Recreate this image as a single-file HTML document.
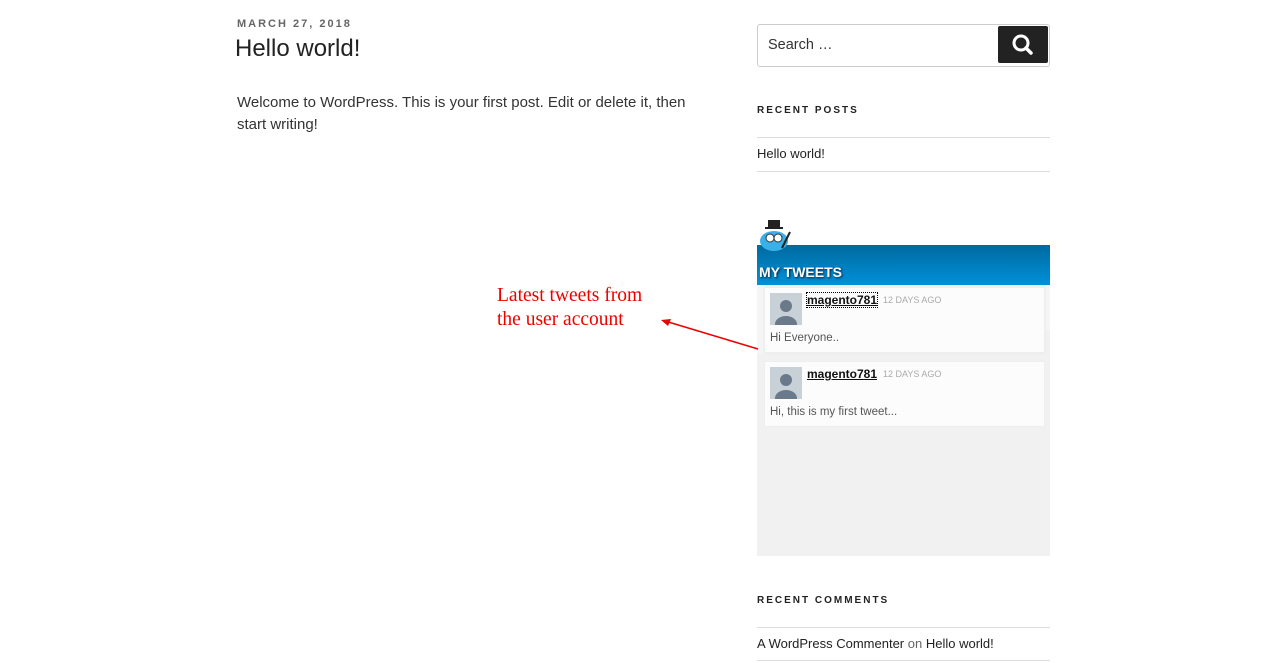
<!DOCTYPE html>
<html><head><meta charset="utf-8"><style>
body{margin:0;width:1286px;height:663px;background:#fff;font-family:"Liberation Sans",sans-serif;color:#333;position:relative;overflow:hidden}
.a{position:absolute}
.date{left:237px;top:18px;font-size:11px;font-weight:bold;letter-spacing:2px;color:#666}
.title{left:235px;top:35px;font-size:24px;color:#222}
.body{left:237px;top:92px;font-size:15px;line-height:22px;color:#333;width:470px}
.search{left:757px;top:24px;width:291px;height:41px;border:1px solid #ccc;border-radius:3px}
.search span{position:absolute;left:10px;top:12px;font-size:14.5px;color:#333}
.sbtn{position:absolute;right:1px;top:1px;width:50px;height:37px;background:#222;border-radius:2px}
.h{font-size:10px;font-weight:bold;letter-spacing:2px;color:#222}
.line{left:757px;width:293px;height:1px;background:#ddd}
.link{font-size:13px;color:#222}
.tw{left:757px;top:245px;width:293px;height:311px;background:#f5f5f5}
.twh{left:757px;top:245px;width:293px;height:40px;background:linear-gradient(#006aa0,#0090d8)}
.twh span{position:absolute;left:2px;top:19px;color:#fff;font-weight:bold;font-size:14px;text-shadow:1px 1px 2px #024}
.card{left:764px;width:279px;height:64px;background:#fcfcfc;border:1px solid #eee}
.av{position:absolute;left:5px;top:5px;width:32px;height:32px;background:#c8d0d8;overflow:hidden}
.un{position:absolute;left:42px;top:5px;font-size:12px;font-weight:bold;color:#111;text-decoration:underline}
.ago{position:absolute;left:118px;top:7px;font-size:9px;color:#aaa}
.tx{position:absolute;left:5px;top:44px;font-size:11.5px;color:#555}
.note{left:497px;top:284px;font-family:"Liberation Serif",serif;color:#e00;font-size:19.5px;line-height:24px}
</style></head><body>
<div class="a date">MARCH 27, 2018</div>
<div class="a title">Hello world!</div>
<div class="a body">Welcome to WordPress. This is your first post. Edit or delete it, then start writing!</div>
<div class="a search"><span>Search …</span><div class="sbtn"><svg width="50" height="37"><circle cx="23" cy="17" r="7" stroke="#fff" stroke-width="3" fill="none"/><line x1="28" y1="22" x2="33" y2="27" stroke="#fff" stroke-width="3.5" stroke-linecap="round"/></svg></div></div>
<div class="a h" style="left:757px;top:105px">RECENT POSTS</div>
<div class="a line" style="top:137px"></div>
<div class="a link" style="left:757px;top:146px">Hello world!</div>
<div class="a line" style="top:171px"></div>
<div class="a tw"></div>
<svg class="a" style="left:757px;top:245px" width="293" height="311"><path d="M0 110 Q150 60 293 85 L293 311 L0 311Z" fill="#f1f1f1"/></svg>
<div class="a twh"><span>MY TWEETS</span></div>
<svg class="a" style="left:758px;top:218px" width="36" height="34"><rect x="10" y="2" width="12" height="8" fill="#222"/><rect x="7" y="9" width="18" height="2" fill="#222"/><ellipse cx="16" cy="23" rx="14" ry="10" fill="#3ab0e8"/><circle cx="12" cy="20" r="4" fill="#fff" stroke="#333"/><circle cx="20" cy="20" r="4" fill="#fff" stroke="#333"/><line x1="24" y1="30" x2="32" y2="14" stroke="#222" stroke-width="2"/></svg>
<div class="a card" style="top:287px;box-shadow:0 0 1px #ddd"><div class="av"><svg width="32" height="32"><circle cx="16" cy="13" r="6" fill="#6a7a8a"/><ellipse cx="16" cy="31" rx="11" ry="8" fill="#6a7a8a"/></svg></div><span class="un" style="outline:1px dotted #000">magento781</span><span class="ago">12 DAYS AGO</span><span class="tx">Hi Everyone..</span></div>
<div class="a card" style="top:361px"><div class="av"><svg width="32" height="32"><circle cx="16" cy="13" r="6" fill="#6a7a8a"/><ellipse cx="16" cy="31" rx="11" ry="8" fill="#6a7a8a"/></svg></div><span class="un">magento781</span><span class="ago">12 DAYS AGO</span><span class="tx">Hi, this is my first tweet...</span></div>
<div class="a note">Latest tweets from<br>the user account</div>
<svg class="a" style="left:655px;top:312px" width="110" height="45"><line x1="103" y1="37" x2="10" y2="9" stroke="#e00" stroke-width="1.5"/><path d="M6 8 L16 7 L13 14Z" fill="#e00"/></svg>
<div class="a h" style="left:757px;top:595px">RECENT COMMENTS</div>
<div class="a line" style="top:627px"></div>
<div class="a link" style="left:757px;top:636px">A WordPress Commenter <span style="color:#666">on</span> Hello world!</div>
<div class="a line" style="top:660px"></div>
</body></html>
